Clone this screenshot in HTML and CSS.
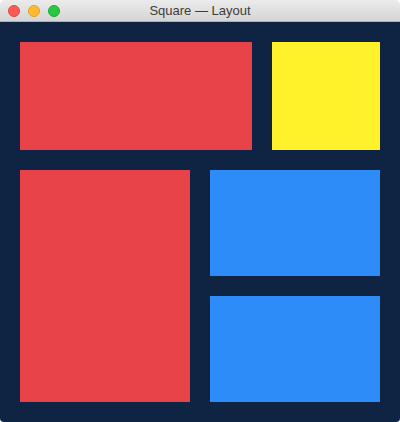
FILE: index.html
```html
<!DOCTYPE html>
<html>
<head>
<meta charset="utf-8">
<link rel="stylesheet" href="styles.css">
</head>
<body>
<div class="window">
  <div class="titlebar">
    <div class="lights">
      <span class="light close"></span>
      <span class="light min"></span>
      <span class="light max"></span>
    </div>
    <div class="title">Square — Layout</div>
  </div>
  <div class="content">
    <div class="row top">
      <div class="box red wide"></div>
      <div class="box yellow square"></div>
    </div>
    <div class="row bottom">
      <div class="box red tall"></div>
      <div class="stack">
        <div class="box blue"></div>
        <div class="box blue"></div>
      </div>
    </div>
  </div>
</div>
</body>
</html>
```
FILE: styles.css
```css
html, body {
  margin: 0;
  padding: 0;
  background: #ffffff;
}
.window {
  width: 400px;
  height: 422px;
  display: flex;
  flex-direction: column;
  border-radius: 5px 5px 4px 4px;
  overflow: hidden;
}
.titlebar {
  height: 21px;
  flex: none;
  position: relative;
  background: linear-gradient(#ebebeb, #d5d5d5);
  border-bottom: 1px solid #b1b1b1;
  display: flex;
  align-items: center;
  justify-content: center;
}
.lights {
  position: absolute;
  left: 8px;
  top: 5px;
  display: flex;
  gap: 8px;
}
.light {
  width: 12px;
  height: 12px;
  border-radius: 50%;
  box-sizing: border-box;
}
.close { background: #fc5b55; border: 1px solid #e2463f; }
.min { background: #fdbc2f; border: 1px solid #e1a123; }
.max { background: #2ac841; border: 1px solid #1eab2f; }
.title {
  font-family: "Helvetica Neue", "Liberation Sans", Arial, sans-serif;
  font-size: 13px;
  color: #3c3c3c;
  line-height: 22px;
}
.content {
  flex: 1;
  background: #0f2342;
  padding: 20px;
  display: flex;
  flex-direction: column;
  gap: 20px;
}
.row {
  display: flex;
  gap: 20px;
}
.row.top { height: 108px; }
.row.bottom { height: 232px; }
.red { background: #e74349; }
.yellow { background: #fff22b; }
.blue { background: #2d8cf7; }
.wide { width: 232px; }
.square { width: 108px; }
.tall { width: 170px; }
.stack {
  width: 170px;
  display: flex;
  flex-direction: column;
  gap: 20px;
}
.stack .box { height: 106px; }
```
